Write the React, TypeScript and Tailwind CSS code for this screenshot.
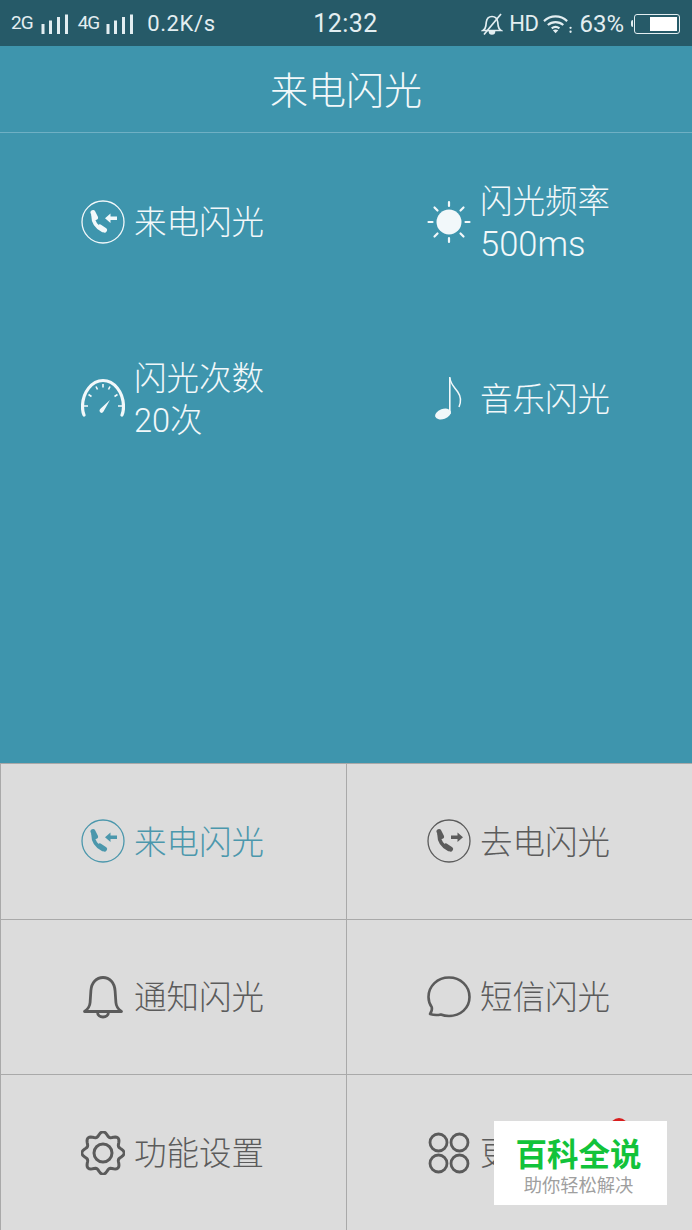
import React from "react";

const gearPath = (() => {
  const pts: string[] = [];
  for (let i = 0; i < 96; i++) {
    const a = (i / 96) * Math.PI * 2;
    const r = 19 + 2.2 * Math.cos(a * 8);
    pts.push(`${(22 + r * Math.sin(a)).toFixed(2)} ${(22 - r * Math.cos(a)).toFixed(2)}`);
  }
  return "M" + pts.join("L") + "Z";
})();

type IconProps = { className?: string };

// phone in a ring, arrow points in or out
const CallIcon = ({ className, out }: IconProps & { out?: boolean }) => (
  <svg viewBox="0 0 44 44" className={className} fill="currentColor">
    <circle cx="22" cy="22" r="21" fill="none" stroke="currentColor" strokeWidth="1.3" />
    <g fill="none" stroke="currentColor" strokeLinecap="round">
      <path d="M12 15c0 7 3.5 12.500 10 15.500" strokeWidth="3.6" />
      <path d="M12 12.500l2.500 5" strokeWidth="5" />
      <path d="M19 27l4.500 3" strokeWidth="5" />
    </g>
    {out ? (
      <path d="M24 16.500h6.500v-3l5.500 4.800-5.500 4.700v-3H24z" />
    ) : (
      <path d="M36 16.500h-6.500v-3L24 18.300l5.500 4.700v-3H36z" />
    )}
  </svg>
);

const SunIcon = ({ className }: IconProps) => (
  <svg viewBox="0 0 44 44" className={className} fill="currentColor">
    <circle cx="22" cy="22" r="12.5" />
    <path
      d="M22 2v4M22 38v4M1.500 22h4M38.500 22h4M7.500 7.500l3 3M33.500 33.500l3 3M36.500 7.500l-3 3M10.500 33.500l-3 3"
      stroke="currentColor"
      strokeWidth="2.2"
      strokeLinecap="round"
    />
  </svg>
);

const GaugeIcon = ({ className }: IconProps) => (
  <svg viewBox="0 0 44 44" className={className} fill="none" stroke="currentColor">
    <path
      d="M3 38c-1-2.500-1.500-5-1.500-8C1.500 15 11 3.500 22 3.500S42.500 15 42.500 30c0 3-.5 5.500-1.500 8"
      strokeWidth="3.2"
      strokeLinecap="round"
    />
    <path
      d="M3 29h4M7.500 17.500l3 2M15 9.500l1.500 3M22 7v3.500M29 9.500l-1.500 3M36.500 17.500l-3 2M41 29h-4"
      strokeWidth="1.600"
    />
    <path
      d="M19.500 35.500c-1.500-1.300-1.200-2.700.2-3.900l9.300-8.600-6.500 11.500c-.8 1.400-1.900 1.900-3 1z"
      fill="currentColor"
      stroke="none"
    />
  </svg>
);

const NoteIcon = ({ className }: IconProps) => (
  <svg viewBox="0 0 44 44" className={className} fill="currentColor">
    <ellipse cx="16" cy="37" rx="8.200" ry="5" transform="rotate(-20 16 37)" />
    <path d="M22 0h1.600v37H22z" />
    <path d="M22.800 1c.8 6 4.500 9 8 14 3 4.300 3.800 9 1.200 15" fill="none" stroke="currentColor" strokeWidth="1.500" />
  </svg>
);

const BellIcon = ({ className }: IconProps) => (
  <svg viewBox="0 0 44 44" className={className} fill="none" stroke="currentColor" strokeWidth="2.8" strokeLinejoin="round">
    <path d="M3.500 36.500c3.700-2.500 5.300-5 5.600-9l.8-12C10.500 7.500 15.500 2.500 22 2.500s11.500 5 12.100 13.500l.8 11.500c.3 4 1.900 6.500 5.600 9z" />
    <path d="M16.500 37c0 3 2.400 5 5.500 5s5.500-2 5.500-5" />
  </svg>
);

const ChatIcon = ({ className }: IconProps) => (
  <svg viewBox="0 0 44 44" className={className} fill="none" stroke="currentColor" strokeWidth="2.6" strokeLinejoin="round">
    <path d="M3 39c1.700-2.500 2.300-4.700 1.800-6.800C2.400 29 1.500 25.500 1.500 22 1.500 11 10.500 2.500 22 2.500s20.500 8.500 20.500 19.500-9 19-20.500 19c-3 0-5.700-.5-8.200-1.500C10.800 40.300 7 40.300 3 39z" />
  </svg>
);

const GearIcon = ({ className }: IconProps) => (
  <svg viewBox="0 0 44 44" className={className} fill="none" stroke="currentColor">
    <path d={gearPath} strokeWidth="3" strokeLinejoin="round" />
    <circle cx="22" cy="22" r="9" strokeWidth="3" />
  </svg>
);

const AppsIcon = ({ className }: IconProps) => (
  <svg viewBox="0 0 44 44" className={className} fill="none" stroke="currentColor" strokeWidth="2.8">
    <circle cx="11.500" cy="11.500" r="8.500" />
    <circle cx="32.500" cy="11.500" r="8.500" />
    <circle cx="11.500" cy="32.500" r="8.500" />
    <circle cx="32.500" cy="32.500" r="8.500" />
  </svg>
);

const SignalBars = () => (
  <svg viewBox="0 0 28 20" className="h-5 w-7" fill="currentColor">
    <rect x="0.5" y="10" width="3" height="10" />
    <rect x="8" y="6.5" width="3" height="13.5" />
    <rect x="16" y="3" width="3" height="17" />
    <rect x="24" y="0.5" width="3" height="19.5" />
  </svg>
);

const MutedBell = () => (
  <svg viewBox="0 0 22 22" className="h-[22px] w-[22px]" fill="none" stroke="currentColor" strokeWidth="1.7">
    <path d="M2 17.500c1.700-1 2.500-2.500 2.800-4.500l.5-4C5.800 5.500 8 3.500 11 3.500s5.200 2 5.700 5.500l.5 4c.3 2 1.100 3.500 2.800 4.500z" />
    <path d="M8.500 18c0 2 1.200 3 2.500 3s2.500-1 2.500-3" fill="currentColor" />
    <path d="M3 21.500 20 1" />
  </svg>
);

const WifiIcon = () => (
  <svg viewBox="0 0 30 20" className="h-5 w-[29px]" fill="none" stroke="currentColor" strokeWidth="2.2">
    <path d="M1 7c7-6.500 17-6.500 24 0M5 11c4.500-4 11.500-4 16 0M9 14.500c2.500-2 5.500-2 8 0" />
    <path d="M13 19.500l-2.800-3c1.700-1.200 3.900-1.200 5.600 0z" fill="currentColor" stroke="none" />
    <circle cx="28.500" cy="14" r="1.200" fill="currentColor" stroke="none" />
    <circle cx="28.500" cy="18" r="1.200" fill="currentColor" stroke="none" />
  </svg>
);

const StatusBar = () => (
  <div className="grid h-[46px] grid-cols-[1fr_auto_1fr] items-center bg-[#265a68] pl-[11px] pr-[12px] pt-px text-[#e3eef1]">
    <div className="flex items-center whitespace-nowrap">
      <span className="text-[19px] tracking-[-1px]">2G</span>
      <span className="ml-[8px]"><SignalBars /></span>
      <span className="ml-[9px] text-[19px] tracking-[-1px]">4G</span>
      <span className="ml-[7px]"><SignalBars /></span>
      <span className="ml-[13px] text-[22px] tracking-[0.6px]">0.2K/s</span>
    </div>
    <div className="text-center text-[25px] tracking-[0.4px]">12:32</div>
    <div className="flex items-center justify-end whitespace-nowrap">
      <MutedBell />
      <span className="ml-[6px] text-[22px] tracking-[-0.5px]">HD</span>
      <span className="ml-[5px]"><WifiIcon /></span>
      <span className="ml-[7px] text-[24px] leading-none">63%</span>
      <span className="ml-[7px] h-[7px] w-[2px] rounded-l-sm bg-[#e3eef1]" />
      <span className="ml-px flex h-[20px] w-[46px] justify-end rounded-[3px] border border-[#e3eef1] p-[2px]">
        <span className="h-full w-[27px] bg-white" />
      </span>
    </div>
  </div>
);

const InfoCell = ({ icon, lines }: { icon: React.ReactNode; lines: React.ReactNode[] }) => (
  <div className="flex h-[177px] items-center gap-[9px] pl-[81px]">
    {icon}
    <div className="pt-[4px] text-[32.5px] font-light leading-[45px]">
      {lines.map((l, i) => (
        <div key={i} className={i > 0 ? "-mt-[3px]" : ""}>
          {l}
        </div>
      ))}
    </div>
  </div>
);

const MenuCell = ({
  icon,
  label,
  className,
}: {
  icon: React.ReactNode;
  label: string;
  className: string;
}) => (
  <div className={`flex items-center gap-[9px] border-t border-l border-[#a9a9a9] pl-[80px] ${className}`}>
    {icon}
    <span className="pt-[4px] text-[32.5px] font-light leading-[45px]">{label}</span>
  </div>
);

export default function App() {
  const iconCls = "h-11 w-11 shrink-0";
  return (
    <div
      className="relative flex h-[1230px] w-[692px] flex-col overflow-hidden"
      style={{ fontFamily: 'Roboto, "Noto Sans CJK SC", sans-serif' }}
    >
      <StatusBar />

      <div className="flex-1 bg-[#3e95ad] text-[#f2f8fa]">
        <header className="flex h-[87px] items-center justify-center border-b border-[#6fb0c4] pt-[5px] text-[38px] font-light">
          来电闪光
        </header>
        <div className="grid grid-cols-2">
          <InfoCell icon={<CallIcon className={iconCls} />} lines={["来电闪光"]} />
          <InfoCell
            icon={<SunIcon className={iconCls} />}
            lines={["闪光频率", <span className="text-[34.5px]">500ms</span>]}
          />
          <InfoCell icon={<GaugeIcon className={iconCls} />} lines={["闪光次数", "20次"]} />
          <InfoCell icon={<NoteIcon className={iconCls} />} lines={["音乐闪光"]} />
        </div>
      </div>

      <div className="grid h-[467px] grid-cols-2 grid-rows-3 bg-[#dcdcdc] text-[#5b5b5b]">
        <MenuCell className="text-[#4b97ac]" icon={<CallIcon className={iconCls} />} label="来电闪光" />
        <MenuCell className="" icon={<CallIcon className={iconCls} out />} label="去电闪光" />
        <MenuCell className="" icon={<BellIcon className={iconCls} />} label="通知闪光" />
        <MenuCell className="" icon={<ChatIcon className={iconCls} />} label="短信闪光" />
        <MenuCell className="" icon={<GearIcon className={iconCls} />} label="功能设置" />
        <MenuCell className="" icon={<AppsIcon className={iconCls} />} label="更多闪光" />
      </div>

      {/* red dot, mostly under the watermark */}
      <div className="absolute left-[610px] top-[1118px] h-[18px] w-[18px] rounded-full bg-[#d81e1e]" />

      {/* watermark */}
      <div className="absolute left-[494px] top-[1121px] flex h-[84px] w-[173px] flex-col items-center bg-white pt-[16px] pr-[4px]">
        <span className="text-[31.5px] font-bold leading-[38px] text-[#12c33a]">百科全说</span>
        <span className="text-[18.3px] leading-[22px] text-[#9f9f9f]">助你轻松解决</span>
      </div>
    </div>
  );
}
